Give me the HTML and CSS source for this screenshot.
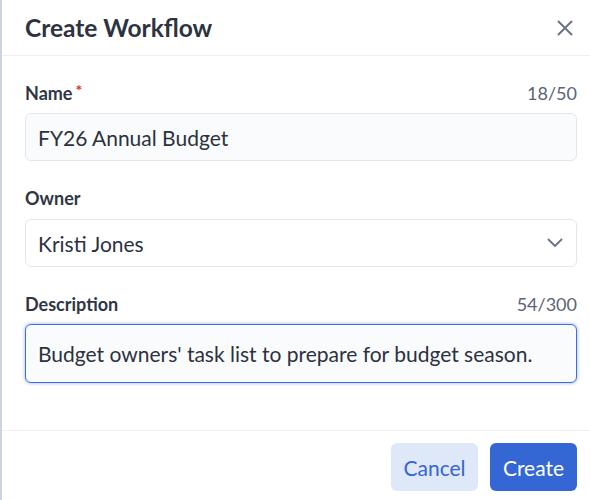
FILE: index.html
```html
<!DOCTYPE html>
<html>
<head>
<meta charset="utf-8">
<link rel="stylesheet" href="styles.css">
</head>
<body>
<div class="dialog">
  <header class="header">
    <h1 class="title">Create Workflow</h1>
    <button class="close" aria-label="Close">
      <svg width="16" height="16" viewBox="0 0 16 16"><path d="M1.5 1.5 L14.5 14.5 M14.5 1.5 L1.5 14.5" stroke="#6b7385" stroke-width="2" stroke-linecap="round" fill="none"/></svg>
    </button>
  </header>
  <main class="body">
    <div class="field">
      <div class="label-row"><span class="label">Name<span class="req">*</span></span><span class="count">18/50</span></div>
      <div class="input">FY26 Annual Budget</div>
    </div>
    <div class="field">
      <div class="label-row"><span class="label">Owner</span></div>
      <div class="input select">Kristi Jones
        <svg class="chev" width="16" height="10" viewBox="0 0 16 10"><path d="M1.5 1.5 L8 8 L14.5 1.5" stroke="#6b7385" stroke-width="1.8" stroke-linecap="round" stroke-linejoin="round" fill="none"/></svg>
      </div>
    </div>
    <div class="field">
      <div class="label-row"><span class="label">Description</span><span class="count">54/300</span></div>
      <div class="input textarea">Budget owners' task list to prepare for budget season.</div>
    </div>
  </main>
  <footer class="footer">
    <button class="btn cancel">Cancel</button>
    <button class="btn create">Create</button>
  </footer>
</div>
</body>
</html>
```
FILE: styles.css
```css
html, body { margin: 0; padding: 0; background: #fff; }
body { font-family: Lato, "Noto Sans", sans-serif; color: #2c3341; }
.dialog {
  width: 590px; height: 500px; box-sizing: border-box;
  border-left: 2px solid #cdd3df;
  display: flex; flex-direction: column;
}
.header {
  flex: 0 0 56px; box-sizing: border-box;
  border-bottom: 1px solid #eef0f5;
  display: flex; align-items: center; justify-content: space-between;
  padding: 0 17px 0 23px;
}
.title { margin: 0; font-size: 24.5px; font-weight: 700; color: #2d3340; }
.close { background: none; border: 0; padding: 0; width: 16px; height: 16px; display: flex; }
.body {
  flex: 1; padding: 27px 13px 0 23px;
  display: flex; flex-direction: column; gap: 27px;
}
.field { display: flex; flex-direction: column; gap: 10px; }
.label-row { display: flex; justify-content: space-between; align-items: center; height: 20px; font-size: 18px; }
.label { font-weight: 700; color: #2f3644; }
.req { color: #d03a2f; margin-left: 3px; position: relative; top: -4px; font-size: 16px; }
.count { color: #5b6477; }
.input {
  height: 48px; box-sizing: border-box;
  border: 1px solid #e3e7ee; border-radius: 6px;
  background: #fafbfc;
  padding: 0 12px; display: flex; align-items: center;
  font-size: 21px; color: #2b3240;
}
.select { background: #fff; justify-content: space-between; padding-right: 13px; margin-top: 1px; }
.textarea {
  height: 59px; border: 1px solid #3f6fdc;
  box-shadow: 0 0 3px 1px rgba(63,111,220,0.35);
}
.footer {
  flex: 0 0 70px; box-sizing: border-box;
  border-top: 1px solid #eef0f5;
  display: flex; justify-content: flex-end; align-items: flex-start;
  gap: 12px; padding: 12px 13px 0 0;
}
.btn {
  width: 87px; height: 48px; border: 0; border-radius: 6px;
  font-family: Lato, "Noto Sans", sans-serif; font-size: 21px;
  padding: 0;
}
.cancel { background: #dfe8f9; color: #3566d0; }
.create { background: #3467d4; color: #fff; }
```
